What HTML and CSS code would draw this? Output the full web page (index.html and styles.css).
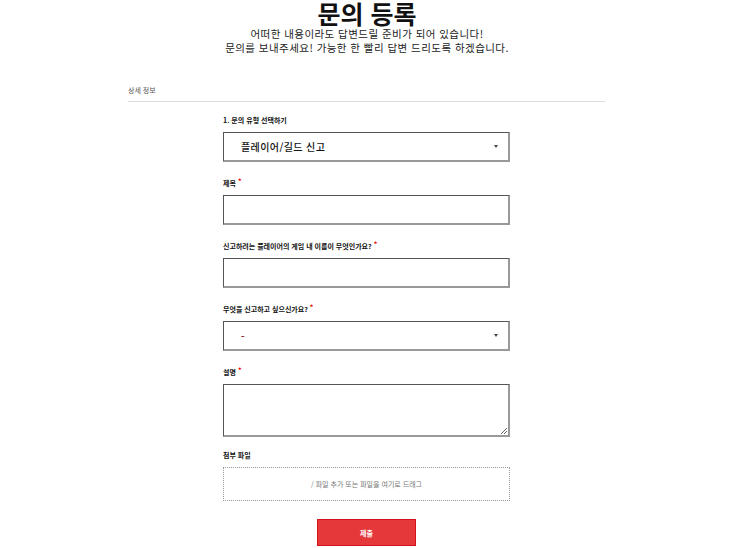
FILE: index.html
```html
<!DOCTYPE html>
<html lang="ko">
<head>
    <meta charset="UTF-8">
    <title>문의 등록</title>
    <link rel="stylesheet" href="styles.css">
</head>
<body>
    <div class="header">
        <h1>문의 등록</h1>
        <p>어떠한 내용이라도 답변드릴 준비가 되어 있습니다!<br>문의를 보내주세요! 가능한 한 빨리 답변 드리도록 하겠습니다.</p>
    </div>
    <div class="section">
        <div class="section-title">상세 정보</div>
        <form class="form">
            <div class="field">
                <label>1. 문의 유형 선택하기</label>
                <div class="box select big">플레이어/길드 신고<span class="arrow"></span></div>
            </div>
            <div class="field">
                <label>제목<i>*</i></label>
                <div class="box"></div>
            </div>
            <div class="field">
                <label>신고하려는 플레이어의 게임 내 이름이 무엇인가요?<i>*</i></label>
                <div class="box"></div>
            </div>
            <div class="field">
                <label>무엇을 신고하고 싶으신가요?<i>*</i></label>
                <div class="box select"><span class="dash">-</span><span class="arrow"></span></div>
            </div>
            <div class="field field-area">
                <label>설명<i>*</i></label>
                <div class="box area"><span class="grip"></span></div>
            </div>
            <div class="field">
                <label>첨부 파일</label>
                <div class="drop">/ 파일 추가 또는 파일을 여기로 드래그</div>
            </div>
            <div class="submit-row">
                <button type="button" class="submit">제출</button>
            </div>
        </form>
    </div>
</body>
</html>
```

FILE: styles.css
```css
*{
    margin: 0;
    padding: 0;
    box-sizing: border-box;
}
body{
    font-family: "Noto Sans CJK KR", "Noto Sans", sans-serif;
    color: #111;
    background: #fff;
}
.header{
    text-align: center;
    padding-right: 6px;
}
.header h1{
    font-size: 25px;
    line-height: 26px;
    font-weight: 700;
    margin-bottom: 1px;
}
.header p{
    font-size: 10.5px;
    line-height: 14px;
    letter-spacing: 0.45px;
    color: #222;
}
.section{
    width: 477px;
    margin: 0 0 0 128px;
    padding-top: 30px;
}
.section-title{
    font-size: 7px;
    color: #555;
    line-height: 10px;
    padding-bottom: 6px;
    border-bottom: 1px solid #ddd;
}
.form{
    width: 287px;
    margin-left: 95px;
    padding-top: 13px;
}
.field{
    margin-bottom: 16px;
}
.field-area{
    margin-bottom: 13px;
}
.field label{
    display: block;
    font-size: 7px;
    font-weight: 700;
    line-height: 10px;
    margin-bottom: 7px;
}
.field label i{
    font-style: normal;
    color: #e00;
    margin-left: 2px;
    vertical-align: top;
    position: relative;
    top: -2px;
}
.box{
    height: 30px;
    border-top: 1px solid #555;
    border-left: 1px solid #555;
    border-right: 2px solid #999;
    border-bottom: 2px solid #999;
    position: relative;
}
.select{
    display: flex;
    align-items: center;
    padding-left: 17px;
    font-size: 10px;
    font-weight: 500;
}
.big{
    letter-spacing: 0.4px;
}
.dash{
    color: #800;
    font-size: 10px;
}
.arrow{
    position: absolute;
    right: 10px;
    top: 12px;
    border-left: 2px solid transparent;
    border-right: 2px solid transparent;
    border-top: 3px solid #444;
}
.area{
    height: 53px;
}
.grip{
    position: absolute;
    right: 1px;
    bottom: 1px;
    width: 6px;
    height: 6px;
    background: linear-gradient(135deg, transparent 45%, #666 45%, #666 55%, transparent 55%, transparent 70%, #666 70%, #666 80%, transparent 80%);
}
.drop{
    height: 34px;
    border: 1px dotted #999;
    display: flex;
    align-items: center;
    justify-content: center;
    font-size: 7px;
    color: #777;
}
.submit-row{
    display: flex;
    justify-content: center;
    padding-top: 2px;
}
.submit{
    width: 99px;
    height: 27px;
    background: #e5383b;
    border: 1px solid #d4141a;
    color: #fff;
    font-family: inherit;
    font-size: 7px;
    font-weight: 700;
}
```
